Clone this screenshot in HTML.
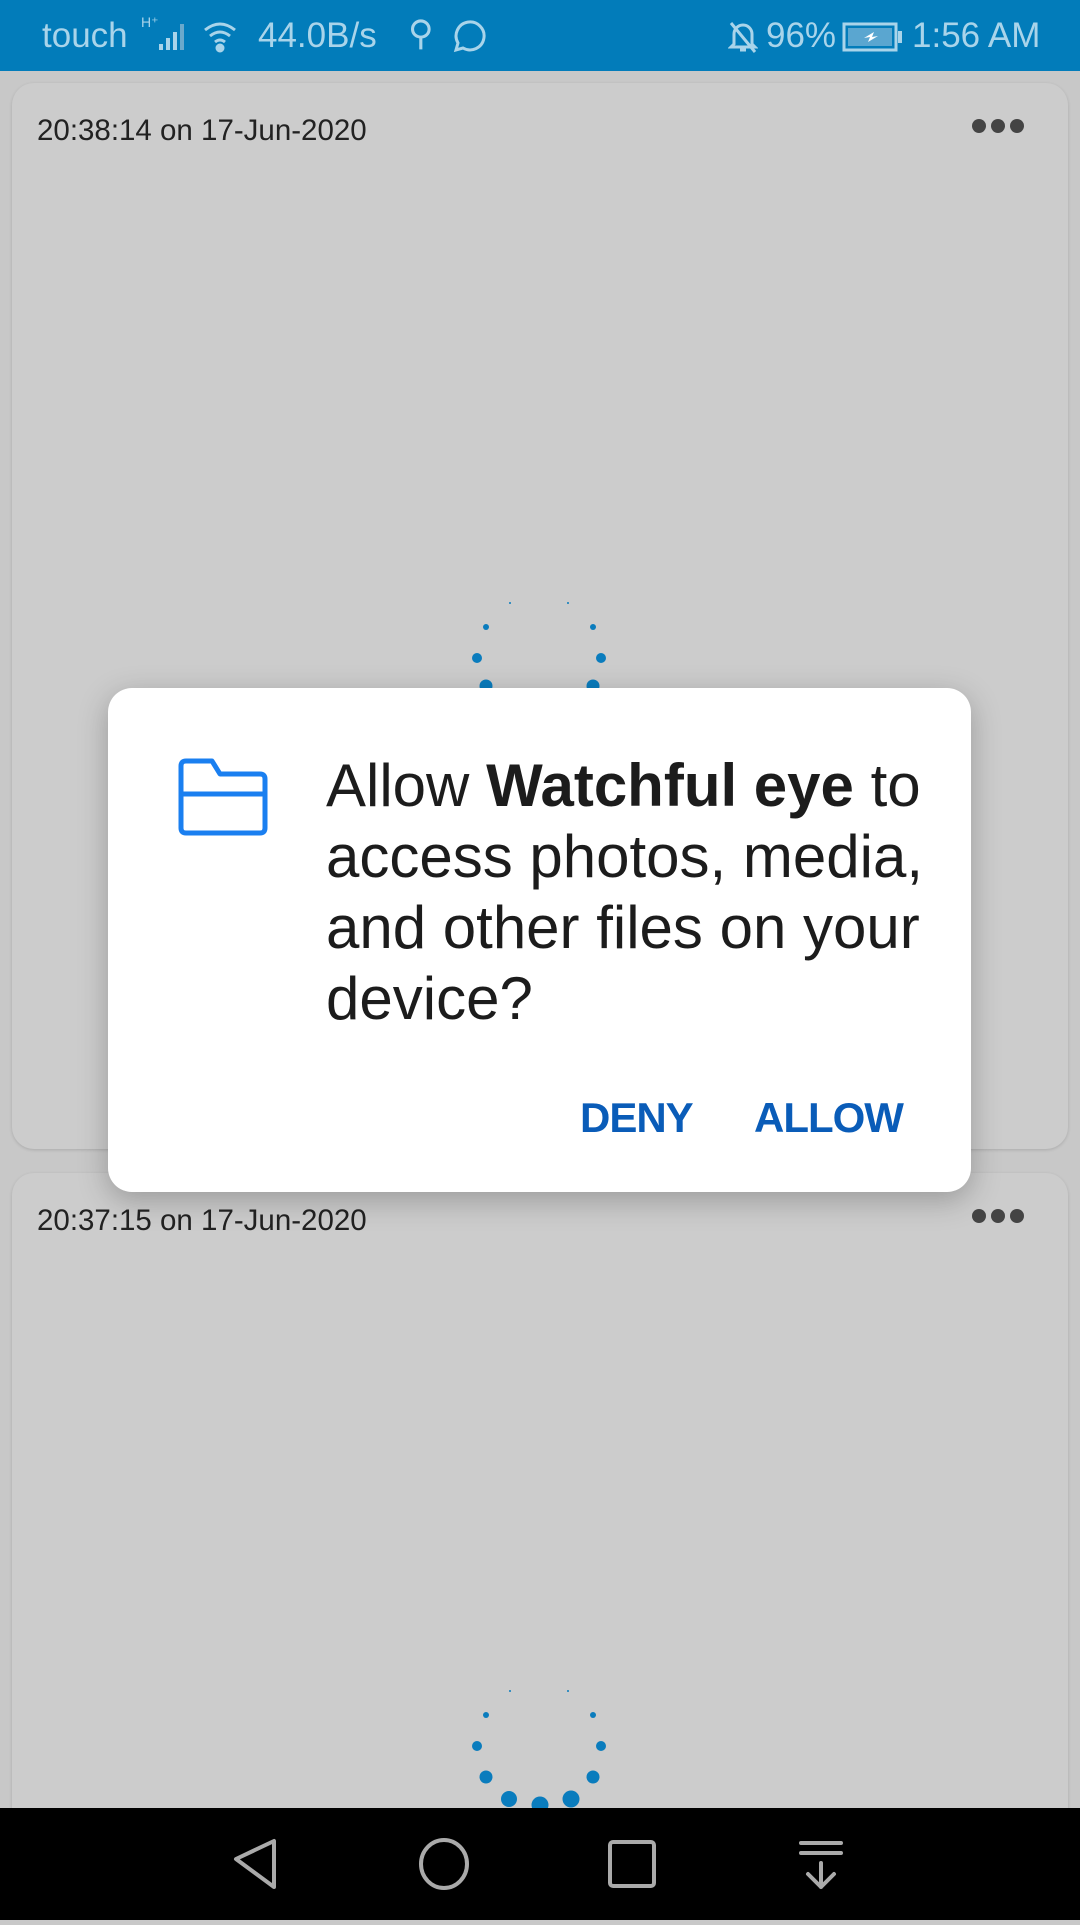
<!DOCTYPE html>
<html><head><meta charset="utf-8"><style>
*{margin:0;padding:0;box-sizing:border-box}
body{width:1080px;height:1920px;position:relative;overflow:hidden;background:#c8c8c8;font-family:"Liberation Sans",sans-serif}
.sb{position:absolute;left:0;top:0;width:1080px;height:71px;background:#027cba;color:#a9d4ea;font-size:35px}
.card{position:absolute;left:12px;width:1056px;background:#cccccc;border-radius:22px;box-shadow:0 1px 3px rgba(0,0,0,.15)}
.ts{position:absolute;left:25px;top:31px;font-size:29.5px;color:#222}
.dots{position:absolute;right:44px;top:36px;display:flex;gap:5px}
.dots i{width:14px;height:14px;border-radius:50%;background:#444;display:block}
.dlg{position:absolute;left:108px;top:688px;width:863px;height:504px;background:#fff;border-radius:24px;box-shadow:0 8px 30px rgba(0,0,0,.25)}
.msg{position:absolute;left:218px;top:62px;width:650px;font-size:60px;line-height:71px;color:#1c1c1c}
.btn{position:absolute;top:406px;font-size:42px;font-weight:bold;color:#0a5cb8;letter-spacing:-1px}
.nav{position:absolute;left:0;top:1808px;width:1080px;height:112px;background:#000}
</style></head><body>
<div class="sb">
<span style="position:absolute;left:42px;top:16px">touch</span>
<span style="position:absolute;left:141px;top:14px;font-size:14px">H⁺</span>
<svg style="position:absolute;left:158px;top:22px" width="34" height="30"><rect x="1" y="22" width="4" height="6" fill="#a9d4ea"/><rect x="8" y="16" width="4" height="12" fill="#a9d4ea"/><rect x="15" y="10" width="4" height="18" fill="#a9d4ea"/><rect x="22" y="2" width="4" height="26" fill="#6aa9cc"/></svg>
<svg style="position:absolute;left:202px;top:20px" width="40" height="34" fill="none" stroke="#a9d4ea" stroke-width="3"><path d="M3 10 Q18 -2 33 10"/><path d="M8 16 Q18 8 28 16"/><path d="M13 22 Q18 18 23 22"/><circle cx="18" cy="28" r="3" fill="#a9d4ea"/></svg>
<span style="position:absolute;left:258px;top:16px">44.0B/s</span>
<span style="position:absolute;left:408px;top:14px">⚲</span>
<svg style="position:absolute;left:448px;top:18px" width="38" height="38" fill="none" stroke="#a9d4ea" stroke-width="3"><path d="M8 32 L10 25 A14 14 0 1 1 15 30 Z"/></svg>
<svg style="position:absolute;left:728px;top:20px" width="30" height="34" fill="none" stroke="#a9d4ea" stroke-width="3"><path d="M6 24 V14 A9 9 0 0 1 24 14 V24 L27 27 H3 Z M12 30 H18 M3 3 L27 32"/></svg>
<span style="position:absolute;left:766px;top:16px">96%</span>
<svg style="position:absolute;left:842px;top:22px" width="62" height="30"><rect x="2" y="2" width="52" height="26" fill="none" stroke="#a9d4ea" stroke-width="3"/><rect x="6" y="6" width="44" height="18" fill="#5aa6d0"/><rect x="56" y="9" width="4" height="12" fill="#a9d4ea"/><path d="M22 16 L32 10 L30 15 L36 14 L26 20 L28 15Z" fill="#fff"/></svg>
<span style="position:absolute;left:912px;top:16px">1:56 AM</span>
</div>

<div class="card" style="top:83px;height:1066px">
<div class="ts">20:38:14 on 17-Jun-2020</div>
<div class="dots"><i></i><i></i><i></i></div>
</div>
<div class="card" style="top:1173px;height:700px">
<div class="ts">20:37:15 on 17-Jun-2020</div>
<div class="dots"><i></i><i></i><i></i></div>
</div>

<svg style="position:absolute;left:0;top:0" width="1080" height="1920" fill="#0a7cbd">
<g transform="translate(539,658)">
<circle cx="-29" cy="-55" r="1"/><circle cx="29" cy="-55" r="1"/><circle cx="-53" cy="-31" r="3"/><circle cx="54" cy="-31" r="3"/><circle cx="-62" cy="0" r="5"/><circle cx="62" cy="0" r="5"/><circle cx="-53" cy="28" r="6.5"/><circle cx="54" cy="28" r="6.5"/>
</g>
<g transform="translate(539,1746)">
<circle cx="-29" cy="-55" r="1"/><circle cx="29" cy="-55" r="1"/><circle cx="-53" cy="-31" r="3"/><circle cx="54" cy="-31" r="3"/><circle cx="-62" cy="0" r="5"/><circle cx="62" cy="0" r="5"/><circle cx="-53" cy="31" r="6.5"/><circle cx="54" cy="31" r="6.5"/><circle cx="-30" cy="53" r="8"/><circle cx="1" cy="59" r="8.5"/><circle cx="32" cy="53" r="8.5"/>
</g>
</svg>

<div class="dlg">
<svg style="position:absolute;left:68px;top:70px" width="94" height="78" fill="none" stroke="#1a7ff0" stroke-width="5" stroke-linejoin="round"><path d="M5 8 Q5 3 10 3 H36 L44 16 H84 Q89 16 89 21 V70 Q89 75 84 75 H10 Q5 75 5 70 Z M5 36 H89"/></svg>
<div class="msg">Allow <b>Watchful eye</b> to access photos, media, and other files on your device?</div>
<div class="btn" style="left:472px">DENY</div>
<div class="btn" style="left:646px">ALLOW</div>
</div>

<div class="nav">
<svg width="1080" height="112" fill="none" stroke="#aaa" stroke-width="4" stroke-linejoin="round" stroke-linecap="round">
<path d="M274 33 V79 L236 51 Z"/>
<ellipse cx="444" cy="56" rx="23" ry="24"/>
<rect x="610" y="34" width="44" height="44" rx="3"/>
<path d="M801 35 H841 M801 45 H841 M821 55 V79 M808 66 L821 79 L834 66"/>
</svg>
</div>
</body></html>
